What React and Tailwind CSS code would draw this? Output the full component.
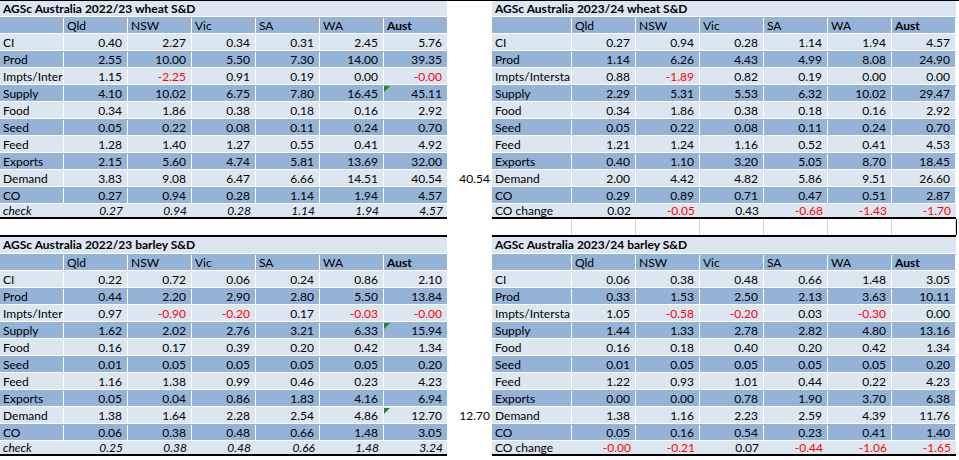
import React from 'react';

const LIGHT = 'bg-[#dce6f1]';
const DARK = 'bg-[#95b3d7]';
const COLS = ['Qld', 'NSW', 'Vic', 'SA', 'WA', 'Aust'];

const wheat2223 = [
  ['CI', '0.40 2.27 0.34 0.31 2.45 5.76'],
  ['Prod', '2.55 10.00 5.50 7.30 14.00 39.35'],
  ['Impts/Inter', '1.15 -2.25 0.91 0.19 0.00 -0.00'],
  ['Supply', '4.10 10.02 6.75 7.80 16.45 45.11'],
  ['Food', '0.34 1.86 0.38 0.18 0.16 2.92'],
  ['Seed', '0.05 0.22 0.08 0.11 0.24 0.70'],
  ['Feed', '1.28 1.40 1.27 0.55 0.41 4.92'],
  ['Exports', '2.15 5.60 4.74 5.81 13.69 32.00'],
  ['Demand', '3.83 9.08 6.47 6.66 14.51 40.54'],
  ['CO', '0.27 0.94 0.28 1.14 1.94 4.57'],
];

const wheat2324 = [
  ['CI', '0.27 0.94 0.28 1.14 1.94 4.57'],
  ['Prod', '1.14 6.26 4.43 4.99 8.08 24.90'],
  ['Impts/Intersta', '0.88 -1.89 0.82 0.19 0.00 0.00'],
  ['Supply', '2.29 5.31 5.53 6.32 10.02 29.47'],
  ['Food', '0.34 1.86 0.38 0.18 0.16 2.92'],
  ['Seed', '0.05 0.22 0.08 0.11 0.24 0.70'],
  ['Feed', '1.21 1.24 1.16 0.52 0.41 4.53'],
  ['Exports', '0.40 1.10 3.20 5.05 8.70 18.45'],
  ['Demand', '2.00 4.42 4.82 5.86 9.51 26.60'],
  ['CO', '0.29 0.89 0.71 0.47 0.51 2.87'],
];

const barley2223 = [
  ['CI', '0.22 0.72 0.06 0.24 0.86 2.10'],
  ['Prod', '0.44 2.20 2.90 2.80 5.50 13.84'],
  ['Impts/Inter', '0.97 -0.90 -0.20 0.17 -0.03 -0.00'],
  ['Supply', '1.62 2.02 2.76 3.21 6.33 15.94'],
  ['Food', '0.16 0.17 0.39 0.20 0.42 1.34'],
  ['Seed', '0.01 0.05 0.05 0.05 0.05 0.20'],
  ['Feed', '1.16 1.38 0.99 0.46 0.23 4.23'],
  ['Exports', '0.05 0.04 0.86 1.83 4.16 6.94'],
  ['Demand', '1.38 1.64 2.28 2.54 4.86 12.70'],
  ['CO', '0.06 0.38 0.48 0.66 1.48 3.05'],
];

const barley2324 = [
  ['CI', '0.06 0.38 0.48 0.66 1.48 3.05'],
  ['Prod', '0.33 1.53 2.50 2.13 3.63 10.11'],
  ['Impts/Intersta', '1.05 -0.58 -0.20 0.03 -0.30 0.00'],
  ['Supply', '1.44 1.33 2.78 2.82 4.80 13.16'],
  ['Food', '0.16 0.18 0.40 0.20 0.42 1.34'],
  ['Seed', '0.01 0.05 0.05 0.05 0.05 0.20'],
  ['Feed', '1.22 0.93 1.01 0.44 0.22 4.23'],
  ['Exports', '0.00 0.00 0.78 1.90 3.70 6.38'],
  ['Demand', '1.38 1.16 2.23 2.59 4.39 11.76'],
  ['CO', '0.05 0.16 0.54 0.23 0.41 1.40'],
];

// green "error check" corner marker like Excel
const Flag = () => (
  <span className="absolute left-0 top-0 w-0 h-0 border-t-[6px] border-t-[#1f8a1f] border-r-[6px] border-r-transparent" />
);

const Num = ({ v, flag }) => (
  <div className={`relative w-[64px] shrink-0 pr-[5px] text-right border-r border-white ${v.startsWith('-') ? 'text-[#ff0000]' : ''}`}>
    {flag && <Flag />}
    {v}
  </div>
);

const Table = ({ title, labelW, rows, last, flags = [], titleH, topCls }) => (
  <div className={`shrink-0 ${labelW === 80 ? 'w-[464px]' : 'w-[447px]'} ${topCls}`}>
    <div className={`${titleH} ${LIGHT} border-b border-white pl-[3px] font-bold leading-[16px]`}>{title}</div>
    <div className={`flex h-[17px] ${DARK} border-b border-white leading-[16px] pt-px`}>
      <div className={`${labelW === 80 ? 'w-[80px]' : 'w-[64px]'} shrink-0 border-r border-white`} />
      {COLS.map((c) => (
        <div key={c} className={`w-[64px] shrink-0 pl-[3px] border-r border-white ${c === 'Aust' ? 'font-bold' : ''}`}>{c}</div>
      ))}
    </div>
    {rows.map(([label, vals], i) => (
      <div key={label} className={`flex h-[17px] ${i % 2 ? DARK : LIGHT} border-b border-white leading-[16px] pt-px`}>
        <div className={`${labelW === 80 ? 'w-[80px]' : 'w-[64px]'} shrink-0 pl-[3px] border-r border-white whitespace-nowrap`}>{label}</div>
        {vals.split(' ').map((v, j) => (
          <Num key={j} v={v} flag={j === 5 && flags.includes(label)} />
        ))}
      </div>
    ))}
    <div className={`flex h-[15px] ${LIGHT} border-b-2 border-black leading-[13px]`}>
      <div className={`${labelW === 80 ? 'w-[80px]' : 'w-[64px]'} shrink-0 pl-[3px] whitespace-nowrap ${last.italic ? 'italic' : ''}`}>{last.label}</div>
      {last.vals.split(' ').map((v, j) => (
        <div key={j} className={`w-[64px] shrink-0 pr-[5px] text-right ${v.startsWith('-') ? 'text-[#ff0000]' : ''} ${last.italic ? 'italic' : ''}`}>{v}</div>
      ))}
    </div>
  </div>
);

// narrow column between the two tables holding a stray cell value
const Side = ({ firstH, value }) => (
  <div className="w-[45px] shrink-0">
    <div className={firstH} />
    {Array.from({ length: 9 }).map((_, i) => (
      <div key={i} className="h-[17px]" />
    ))}
    <div className="h-[17px] pr-[2px] text-right leading-[16px] pt-px">{value}</div>
  </div>
);

export default function App() {
  return (
    <div className="w-[959px] h-[460px] overflow-hidden bg-white border-t border-black text-black text-[12px] font-['Lato',sans-serif]">
      <div className="flex">
        <Table
          title="AGSc Australia 2022/23 wheat S&D"
          labelW={64}
          rows={wheat2223}
          flags={['Supply']}
          titleH="h-[16px]"
          last={{ label: 'check', vals: '0.27 0.94 0.28 1.14 1.94 4.57', italic: true }}
        />
        <Side firstH="h-[16px]" value="40.54" />
        <div>
          <Table
            title="AGSc Australia 2023/24 wheat S&D"
            labelW={80}
            rows={wheat2324}
            titleH="h-[16px]"
            last={{ label: 'CO change', vals: '0.02 -0.05 0.43 -0.68 -1.43 -1.70' }}
          />
          <div className="flex h-[16px] w-[465px] border-r border-black">
            <div className="w-[80px] shrink-0 border-r border-[#d4d4d4]" />
            {COLS.map((c) => (
              <div key={c} className="w-[64px] shrink-0 border-r border-[#d4d4d4]" />
            ))}
          </div>
        </div>
      </div>
      <div className="flex">
        <Table
          title="AGSc Australia 2022/23 barley S&D"
          labelW={64}
          rows={barley2223}
          flags={['Supply', 'Demand']}
          titleH="h-[17px]"
          topCls="border-t-2 border-black"
          last={{ label: 'check', vals: '0.25 0.38 0.48 0.66 1.48 3.24', italic: true }}
        />
        <Side firstH="h-[19px]" value="12.70" />
        <Table
          title="AGSc Australia 2023/24 barley S&D"
          labelW={80}
          rows={barley2324}
          titleH="h-[17px]"
          topCls="border-t-2 border-black"
          last={{ label: 'CO change', vals: '-0.00 -0.21 0.07 -0.44 -1.06 -1.65' }}
        />
      </div>
    </div>
  );
}
